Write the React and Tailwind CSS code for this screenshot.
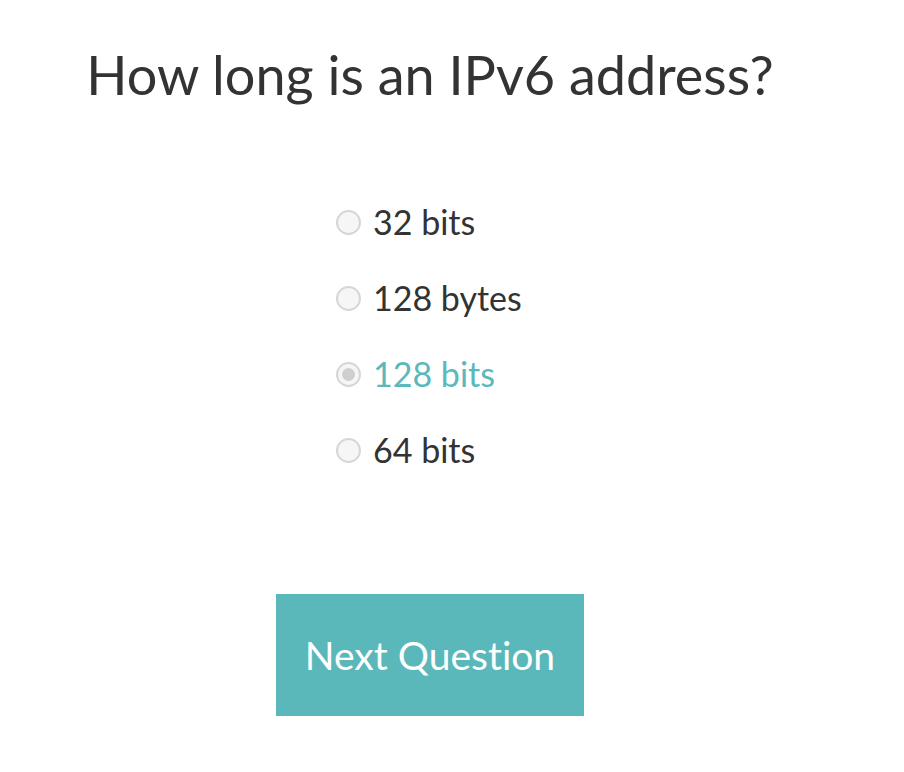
import { useState } from "react";

const options = ["32 bits", "128 bytes", "128 bits", "64 bits"];

function Radio({ checked }) {
  return (
    <span className="w-[25px] h-[25px] flex-shrink-0 rounded-full border-2 border-[#d6d6d6] bg-[#f6f6f6] flex items-center justify-center">
      {checked && <span className="w-[13px] h-[13px] rounded-full bg-[#cfcfcf]" />}
    </span>
  );
}

export default function App() {
  const [selected, setSelected] = useState(2);

  return (
    <div
      className="w-[904px] h-[772px] bg-white text-[#333333] [font-variant-ligatures:none]"
      style={{ fontFamily: "Lato, 'Noto Sans', sans-serif" }}
    >
      <div className="w-[860px] flex flex-col">
        <h1 className="pt-[40px] h-[116px] text-center text-[54px] font-normal leading-[70px]">
          How long is an IPv6 address?
        </h1>

        {/* Answers */}
        <div className="pl-[336px] pt-[82px] flex flex-col gap-[28px]">
          {options.map((opt, i) => (
            <label
              key={opt}
              onClick={() => setSelected(i)}
              className="flex items-center gap-[12px] h-[48px] cursor-pointer"
            >
              <Radio checked={selected === i} />
              <span className={`text-[34px] leading-none ${selected === i ? "text-[#5bb8bb]" : "text-[#333333]"}`}>
                {opt}
              </span>
            </label>
          ))}
        </div>

        <div className="pt-[120px] flex justify-center">
          <button className="w-[308px] h-[122px] bg-[#5ab8bb] text-white text-[39px] leading-none">
            Next Question
          </button>
        </div>
      </div>
    </div>
  );
}
